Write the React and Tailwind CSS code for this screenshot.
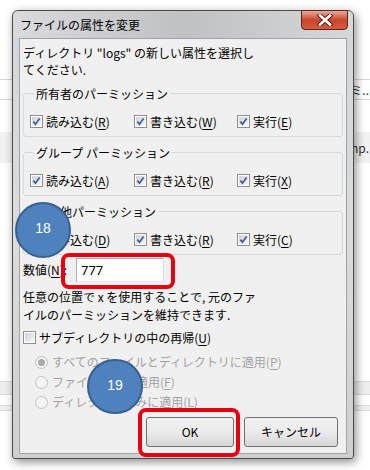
import React from 'react';

const jp = "font-['Noto_Sans_CJK_JP','Noto_Sans_CJK_SC',sans-serif]";

function Check({ checked }) {
    return (
        <span className="w-[13px] h-[13px] border border-[#8e8f8f] bg-white p-[1px] flex shrink-0">
            <span className="flex-1 bg-gradient-to-br from-[#cfd2d7] to-[#f7f7f7] flex items-center justify-center">
                {checked && (
                    <svg width="9" height="9" viewBox="0 0 9 9">
                        <path d="M1.4 4.6 L3.5 7.2 L7.6 1.4" stroke="#3c5a96" strokeWidth="1.7" fill="none" />
                    </svg>
                )}
            </span>
        </span>
    );
}

function Radio({ selected }) {
    return (
        <span className="w-[13px] h-[13px] rounded-full border border-[#c2c2c2] bg-[#f4f4f4] flex items-center justify-center shrink-0">
            {selected && <span className="w-[7px] h-[7px] rounded-full bg-[#a8a8a8]" />}
        </span>
    );
}

function Key({ k }) {
    return <>(<span className="underline underline-offset-2">{k}</span>)</>;
}

function Item({ label, k, w }) {
    return (
        <label className={`flex items-center gap-[3px] h-[17px] ${w}`}>
            <Check checked />
            <span>{label}<Key k={k} /></span>
        </label>
    );
}

function Group({ title, items }) {
    return (
        <fieldset className="border border-[#d5d9dd] rounded-[3px] mx-0 px-[6px] pt-[11px] pb-[6px] mt-[7px] first:mt-[6px]">
            <legend className="ml-[4px] px-[2px] leading-[17px]">{title}</legend>
            <div className="flex">
                <Item label={items[0][0]} k={items[0][1]} w="w-[104px]" />
                <Item label={items[1][0]} k={items[1][1]} w="w-[103px]" />
                <Item label={items[2][0]} k={items[2][1]} w="" />
            </div>
        </fieldset>
    );
}

function Backdrop() {
    return (
        <div className={`flex flex-col text-[12px] text-[#333] ${jp}`}>
            <div className="h-[79px]" />
            <div className="h-[21px] border-y border-[#d6d6d6] flex justify-end items-center overflow-hidden">
                <span className="whitespace-nowrap pr-[1px]">パーミ..</span>
            </div>
            <div className="h-[32px]" />
            <div className="h-[31px] bg-[#f1f1f1] flex justify-end items-center overflow-hidden">
                <span className="whitespace-nowrap pr-[1px]">tmp.</span>
            </div>
            <div className="h-[218px]" />
            <div className="h-[14px] bg-[#eeeeee] border-y border-[#dadada]" />
            <div className="h-[10px]" />
            <div className="h-[6px] bg-[#f0f0f0] border-y border-[#dddddd]" />
        </div>
    );
}

export default function App() {
    return (
        <div className="relative w-[370px] h-[470px] bg-white overflow-hidden">
            <Backdrop />

            {/* dialog window */}
            <div className="absolute left-[12px] top-[10px] w-[342px] h-[449px] box-border border border-[#4b4b4b] rounded-t-[6px] rounded-b-[3px] bg-gradient-to-b from-[#d3d6d9] via-[#dcdcdc] to-[#cfcfcf] shadow-[2px_3px_10px_rgba(0,0,0,0.45)] flex flex-col">
                <div className="h-[27px] flex justify-between items-start shrink-0 rounded-t-[6px] bg-gradient-to-r from-[#d9dadb] via-[#bfc1c3] to-[#d6d7d8]">
                    <span className={`self-center pl-[7px] text-[12px] text-black ${jp}`}>ファイルの属性を変更</span>
                    <div className="-mt-[1px] mr-[5px] w-[47px] h-[20px] rounded-b-[4px] border border-[#5e2416] bg-gradient-to-b from-[#e9a899] via-[#c8442c] to-[#d65c3f] flex items-center justify-center">
                        <svg width="16" height="12" viewBox="0 0 16 12">
                            <path d="M3 1.5 L13 10.5 M13 1.5 L3 10.5" stroke="#4a1a10" strokeWidth="4.4" strokeLinecap="square" />
                            <path d="M3 1.5 L13 10.5 M13 1.5 L3 10.5" stroke="#ffffff" strokeWidth="2.6" strokeLinecap="square" />
                        </svg>
                    </div>
                </div>

                <div className={`mx-[6px] h-[416px] shrink-0 box-border border border-[#9ea3a8] bg-[#f0f0f0] px-[3px] text-[12px] text-black ${jp} flex flex-col`}>
                    <p className="pt-[5px] leading-[17px]">
                        ディレクトリ "logs" の新しい属性を選択し<br />てください.
                    </p>

                    <Group title="所有者のパーミッション" items={[['読み込む', 'R'], ['書き込む', 'W'], ['実行', 'E']]} />
                    <Group title="グループ パーミッション" items={[['読み込む', 'A'], ['書き込む', 'R'], ['実行', 'X']]} />
                    <Group title="その他パーミッション" items={[['読み込む', 'D'], ['書き込む', 'R'], ['実行', 'C']]} />

                    <div className="flex items-center h-[24px] mt-[3px]">
                        <span className="w-[53px]">数値<Key k="N" />:</span>
                        <input
                            readOnly
                            value="777"
                            className="w-[88px] h-[24px] box-border border border-[#abadb3] border-b-[#e3e9ef] border-r-[#dbdfe6] bg-white px-[4px] text-[13px] outline-none font-['Noto_Sans','Liberation_Sans',sans-serif]"
                        />
                    </div>

                    <p className="mt-[6px] leading-[18px]">
                        任意の位置で x を使用することで, 元のファ<br />イルのパーミッションを維持できます.
                    </p>

                    <label className="flex items-center gap-[3px] h-[17px] mt-[5px]">
                        <Check />
                        <span>サブディレクトリの中の再帰<Key k="U" /></span>
                    </label>

                    <div className="mt-[6px] pl-[12px] flex flex-col text-[#a2a2a2]">
                        <div className="flex items-center gap-[4px] h-[20px]">
                            <Radio selected />
                            <span>すべてのファイルとディレクトリに適用<Key k="P" /></span>
                        </div>
                        <div className="flex items-center gap-[4px] h-[20px]">
                            <Radio />
                            <span>ファイルのみに適用<Key k="F" /></span>
                        </div>
                        <div className="flex items-center gap-[4px] h-[20px]">
                            <Radio />
                            <span>ディレクトリのみに適用<Key k="L" /></span>
                        </div>
                    </div>

                    <div className="mt-[5px] pr-[5px] flex justify-end gap-[10px]">
                        <button className="w-[88px] h-[30px] rounded-[3px] border border-[#707070] bg-gradient-to-b from-[#f2f2f2] via-[#ebebeb] to-[#d6d6d6] text-[12px]">OK</button>
                        <button className="w-[94px] h-[30px] rounded-[3px] border border-[#707070] bg-gradient-to-b from-[#f2f2f2] via-[#ebebeb] to-[#d6d6d6] text-[12px]">キャンセル</button>
                    </div>
                </div>
            </div>

            {/* annotations */}
            <div className="absolute left-[61px] top-[253px] w-[114px] h-[36px] border-[4px] border-[#e50012] rounded-[8px]" />
            <div className="absolute left-[138px] top-[408px] w-[102px] h-[49px] border-[4px] border-[#e50012] rounded-[8px]" />

            <div className="absolute left-[15px] top-[202px] w-[56px] h-[56px] rounded-full bg-[#4f81bd] border-2 border-[#36608f] flex items-center justify-center pb-[4px] text-white text-[14px] font-['Liberation_Sans',sans-serif]">18</div>
            <div className="absolute left-[87px] top-[359px] w-[56px] h-[55px] rounded-full bg-[#4f81bd] border-2 border-[#36608f] flex items-center justify-center pb-[3px] text-white text-[14px] font-['Liberation_Sans',sans-serif]">19</div>
        </div>
    );
}
